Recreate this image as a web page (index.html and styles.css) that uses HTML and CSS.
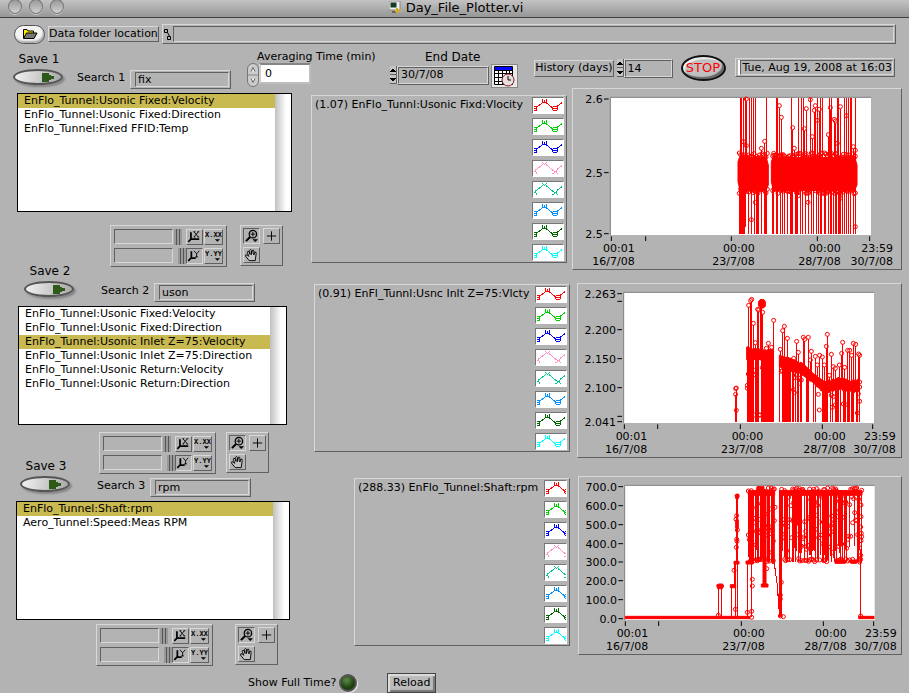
FILE: index.html
```html
<!DOCTYPE html>
<html lang="en">
<head>
<meta charset="utf-8">
<title>Day_File_Plotter.vi</title>
<link rel="stylesheet" href="styles.css">
</head>
<body>
<svg class="defs" aria-hidden="true">
  <defs>
    <symbol id="axis-x" viewBox="0 0 17 15"><path d="M4.500 2V10H14M4.500 10L1.500 13" fill="none" stroke="#000" stroke-width="2"/><path d="M8 1.500L13 7.500M13 1.500L8 7.500M7.500 1.500h2M12 1.500h2M7.500 7.500h2M12 7.500h2" fill="none" stroke="#000"/></symbol>
    <symbol id="axis-y" viewBox="0 0 17 15"><path d="M5 2V10H10M4.500 10L1.500 13" fill="none" stroke="#000" stroke-width="2"/><path d="M8 1.500L11 5L14 1.500M11 5V9M9.500 8.500h3" fill="none" stroke="#000"/></symbol>
    <symbol id="fmt-x" viewBox="0 0 19 15"><text class="fmt" x="0" y="8">X.XX</text><path d="M11 10h6l-3 3z"/></symbol>
    <symbol id="fmt-y" viewBox="0 0 19 15"><text class="fmt" x="0" y="8">Y.YY</text><path d="M11 10h6l-3 3z"/></symbol>
    <symbol id="zoom" viewBox="0 0 16 15"><circle cx="9.500" cy="5.500" r="4" fill="none" stroke="#000" stroke-width="1.300"/><path d="M7 5.500h5M9.500 3v5" stroke="#000"/><path d="M6.500 8.500L2 13" stroke="#000" stroke-width="2.200"/><path d="M9 11h6l-3 3z"/></symbol>
    <symbol id="cross" viewBox="0 0 16 15"><path d="M3 7.500h10M8 2.500v10" stroke="#000"/></symbol>
    <symbol id="hand" viewBox="0 0 16 15"><path d="M5.500 13.500L1.500 8.500Q1.500 6.500 3.500 7.500L5 9L3.500 4.500Q4 2.500 5.500 4L6.500 7L6 2.500Q7 .5 8 2.500V7L9 2.500Q10.500 1.500 10.500 3.500V7.500L11.500 4.500Q13.500 4 13 6L12 13.500Z" fill="#c4c4c4" stroke="#000"/></symbol>
    <symbol id="mark-square" viewBox="0 0 30 15"><path d="M3 9.500L10 4.500M13 4.500L19 9.500M24 8.500L29 4.500" fill="none" stroke="currentColor"/><path d="M1 8.500h3M1 10.500h3M1 12.500h3M3.500 8v5M9.500 1v4M13.500 1v4M9 4.500h5M11.500 2v2M20 8.500h4M20 12.500h4M19.500 9v3M24.500 9v3M19 10.500h6" fill="none" stroke="currentColor"/></symbol>
    <symbol id="mark-cross" viewBox="0 0 30 15"><path d="M2 9.500L10 3.500M13 3.500L20 9.500M24 8.500L29 4.500M1 10.500h2M3.500 11v2M9.500 1v1M10.500 2v1M13.500 1v1M12.500 2v1M11.500 3v1M19 12.500h2M21 11.500h1M21 10.500h3M20 9.500h1M23 9.500h1M23 11.500h1M24 12.500h1" fill="none" stroke="currentColor"/></symbol>
    <symbol id="save-arrow" viewBox="0 0 13 9"><path d="M0 0H7V2H9V3H12V6H9V7H7V9H0Z" fill="#2d5a19"/></symbol>
    <symbol id="steps" viewBox="0 0 7 18"><path d="M0 0h6v18H0z" fill="#c4c4c4"/><path d="M0 8.500h6M0 17.500h6M6.500 0v18" stroke="#606060"/><path d="M0 6L3 2.500L6 6zM0 12L3 15.500L6 12z"/></symbol>
  </defs>
</svg>

<header class="titlebar">
  <div class="lights"><i></i><i></i><i></i></div>
  <h1><svg width="13" height="13" viewBox="0 0 13 13"><rect x="0" y="0" width="11" height="9" fill="#eee" stroke="#888"/><rect x="1.500" y="1.500" width="6" height="5" fill="#143c22"/><path d="M3 11h6" stroke="#666" stroke-width="2"/><path d="M8 7v5M6 10l6-1" stroke="#d9ad22" stroke-width="2"/></svg>Day_File_Plotter.vi</h1>
</header>

<main>
  <div class="path-row">
    <button class="open" aria-label="Open folder"><svg width="16" height="12" viewBox="0 0 16 12"><path d="M1.500 10V1.500H5L6 3H11.500V5" fill="#ffe800" stroke="#000"/><path d="M1.500 10.500L4.500 5H15L12 10.500Z" fill="#777" stroke="#000"/></svg></button>
    <label class="raised" for="path">Data folder location</label>
    <div class="frame path"><svg width="7" height="13" viewBox="0 0 7 13"><path d="M.5 1.500h3v3h-3zM3.500 8.500h3v3h-3zM3.500 4.500L5.500 8" fill="none" stroke="#000"/></svg><input id="path" type="text"></div>
  </div>

  <div class="toolbar">
    <div class="save"><label for="save1">Save 1</label><button id="save1"><svg width="13" height="9"><use href="#save-arrow"/></svg></button></div>
    <div class="search search-top"><label for="search1">Search 1</label><div class="frame"><input id="search1" type="text" value="fix"></div></div>
    <div class="average">
      <label for="avg">Averaging Time (min)</label>
      <div class="row"><span class="knob"><svg width="12" height="24" viewBox="0 0 12 24"><rect x=".5" y=".5" width="11" height="23" rx="5.500" fill="#ccc" stroke="#777"/><path d="M1 12h10" stroke="#888"/><path d="M4 8.500L6 4.500L8 8.500M4 15.500L6 19.500L8 15.500" fill="#eee" stroke="#666"/></svg></span><input id="avg" type="text" value="0"></div>
    </div>
    <div class="end-date">
      <label for="end">End Date</label>
      <div class="row"><svg class="stepper"><use href="#steps"/></svg><div class="frame value"><input id="end" type="text" value="30/7/08"></div>
      <button class="calendar" aria-label="Choose date"><svg width="21" height="21" viewBox="0 0 21 21"><path d="M.5.5h18v18H.5z" fill="#fff" stroke="#000"/><path d="M1 1h17v3H1z" fill="#00f"/><path d="M1 4.500h17M1 7.500h17M1 11.500h17M1 15.500h17M4.500 4v14M8.500 4v14M12.500 4v14M15.500 4v14" stroke="#000"/><circle cx="14" cy="14" r="6" fill="#e9dede" stroke="#802020"/><path d="M14 10v4h3" fill="none" stroke="#000"/></svg></button></div>
    </div>
    <div class="history row"><label class="raised" for="hist">History (days)</label><svg class="stepper"><use href="#steps"/></svg><div class="frame value"><input id="hist" type="text" value="14"></div></div>
    <button class="stop">STOP</button>
    <div class="frame clock"><output>Tue, Aug 19, 2008 at 16:03</output></div>
  </div>

  <div class="columns">
    <div class="channels">
      <div class="list list-1"><select size="8" aria-label="Channels 1"><option selected>EnFlo_Tunnel:Usonic Fixed:Velocity</option><option>EnFlo_Tunnel:Usonic Fixed:Direction</option><option>EnFlo_Tunnel:Fixed FFID:Temp</option></select><i class="scroll"></i></div>
      <div class="between between-1">
        <div class="save"><label for="save2">Save 2</label><button id="save2"><svg width="13" height="9"><use href="#save-arrow"/></svg></button></div>
        <div class="side">
          <div class="palettes" data-palettes></div>
          <div class="search"><label for="search2">Search 2</label><div class="frame"><input id="search2" type="text" value="uson"></div></div>
        </div>
      </div>
      <div class="list list-2"><select size="8" aria-label="Channels 2"><option>EnFlo_Tunnel:Usonic Fixed:Velocity</option><option>EnFlo_Tunnel:Usonic Fixed:Direction</option><option selected>EnFlo_Tunnel:Usonic Inlet Z=75:Velocity</option><option>EnFlo_Tunnel:Usonic Inlet Z=75:Direction</option><option>EnFlo_Tunnel:Usonic Return:Velocity</option><option>EnFlo_Tunnel:Usonic Return:Direction</option></select><i class="scroll"></i></div>
      <div class="between between-2">
        <div class="save"><label for="save3">Save 3</label><button id="save3"><svg width="13" height="9"><use href="#save-arrow"/></svg></button></div>
        <div class="side">
          <div class="palettes" data-palettes></div>
          <div class="search"><label for="search3">Search 3</label><div class="frame"><input id="search3" type="text" value="rpm"></div></div>
        </div>
      </div>
      <div class="list list-3"><select size="8" aria-label="Channels 3"><option selected>EnFlo_Tunnel:Shaft:rpm</option><option>Aero_Tunnel:Speed:Meas RPM</option></select><i class="scroll"></i></div>
      <div class="palettes palettes-last" data-palettes></div>
    </div>

    <div class="legends">
      <div class="legend legend-1"><span>(1.07) EnFlo_Tunnl:Usonic Fixd:Vlocity</span><div class="swatches"></div></div>
      <div class="legend legend-2"><span>(0.91) EnFl_Tunnl:Usnc Inlt Z=75:Vlcty</span><div class="swatches"></div></div>
      <div class="legend legend-3"><span>(288.33) EnFlo_Tunnel:Shaft:rpm</span><div class="swatches"></div></div>
    </div>

    <div class="plots">
      <div class="plot plot-1"><svg id="plot1" viewBox="9 12 984 540" role="img" aria-label="Usonic fixed velocity"></svg></div>
      <div class="plot plot-2"><svg id="plot2" viewBox="24 12 969 519" role="img" aria-label="Usonic inlet velocity"></svg></div>
      <div class="plot plot-3"><svg id="plot3" viewBox="27 21 966 531" role="img" aria-label="Shaft rpm"></svg></div>
    </div>
  </div>

  <footer>
    <label for="full">Show Full Time?</label><input id="full" type="checkbox" class="led">
    <button class="reload">Reload</button>
  </footer>
</main>
<script src="app.js"></script>
</body>
</html>
```
FILE: styles.css
```css
* { box-sizing: border-box; }
body { margin: 0; background: #b3b3b3; color: #000; font: 11px/14px "DejaVu Sans", sans-serif; }
button, input, select { font: inherit; color: inherit; margin: 0; padding: 0; border: 0; border-radius: 0; background: transparent; outline: 0; }
input { min-width: 0; }
svg { display: block; flex: none; }
.defs { position: absolute; width: 0; height: 0; }
.row { display: flex; }

.titlebar { position: relative; display: flex; justify-content: center; height: 18px; background: linear-gradient(#c3c3c3, #969696); border-bottom: 1px solid #404040; }
.titlebar h1 { display: flex; gap: 4px; margin: 0 0 0 3px; font: 13px/15px "DejaVu Sans", sans-serif; }
.titlebar h1 svg { margin-top: 1px; }
.lights { position: absolute; left: 8px; top: -1px; display: flex; gap: 7px; }
.lights i { width: 14px; height: 15px; border: 1px solid #777; border-radius: 50%; background: linear-gradient(#999, #d0d0d0); box-shadow: 0 1px #ccc; }

.frame { display: flex; height: 19px; padding: 1px; border: 1px solid; border-color: #d8d8d8 #606060 #606060 #d8d8d8; }
.frame input { flex: 1; width: 100%; padding-left: 2px; border: 1px solid; border-color: #606060 #d8d8d8 #d8d8d8 #606060; }
.raised { border: 1px solid; border-color: #d8d8d8 #606060 #606060 #d8d8d8; white-space: nowrap; }

.path-row { display: flex; align-items: center; padding: 6px 13px 0 14px; }
.open { display: flex; align-items: center; justify-content: center; width: 31px; height: 19px; border: 1px solid #555; border-radius: 10px; background: #f4f4f4; box-shadow: inset -1px -2px 2px #aaa; }
.path-row .raised { margin: 0 3px; min-width: 107px; }
.path { flex: 1; height: 20px; }
.path svg { margin: 2px 2px 0 0; }

.toolbar { display: flex; align-items: flex-start; padding: 2px 14px 0 13px; height: 44px; }
.save { width: 52px; flex: none; text-align: center; }
.save label { display: block; font-size: 12px; line-height: 16px; margin-top: 5px; }
.save button { display: flex; align-items: center; justify-content: flex-end; width: 50px; height: 16px; padding-right: 6px; margin-top: 2px; border: 2px solid #555; border-radius: 50%; background: linear-gradient(100deg, #f2f2f2, #a8a8a8); box-shadow: 2px 2px 2px #858585; }
.search { display: flex; align-items: flex-start; }
.search label { width: 53px; padding-top: 1px; white-space: nowrap; }
.search .frame { width: 101px; }
.search input { margin-left: 3px; }
.search-top { margin: 24px 0 0 12px; }
.average { margin: 5px 0 0 16px; width: 126px; }
.average label { display: block; margin-left: 10px; line-height: 12px; white-space: nowrap; }
.average input { width: 52px; height: 21px; padding: 0 4px; background: #fff; border: 2px solid; border-color: #858585 #bebebe #bebebe #d0d0d0; }
.end-date { margin: 2px 0 0 17px; width: 130px; }
.end-date > label { display: block; margin-left: 35px; font-size: 12px; line-height: 18px; white-space: nowrap; }
.stepper { width: 7px; height: 18px; shape-rendering: crispEdges; }
.value { padding: 0; }
.end-date .row { align-items: center; height: 18px; }
.end-date .frame { width: 92px; }
.calendar { display: flex; align-items: center; justify-content: center; width: 27px; height: 24px; margin: 2px 0 0 2px; background: #e8e8e8; border: 1px solid #888; }
.history { margin: 13px 0 0 15px; }
.history .raised { height: 17px; margin: 1px 3px 0 0; min-width: 78px; }
.history .frame { width: 49px; }
.stop { flex: none; width: 45px; height: 26px; margin: 9px 0 0 8px; color: #f00; font-size: 13px; border: 2px solid #111; border-radius: 50%; background: #c0c0c0; box-shadow: inset 2px 2px 1px #eee, inset -2px -2px 1px #666; }
.clock { margin: 12px 0 0 9px; flex: 1; max-width: 220px; }
.clock output { flex: 1; margin-left: 3px; padding-left: 2px; border: 1px solid; border-color: #606060 #d8d8d8 #d8d8d8 #606060; white-space: nowrap; box-shadow: -2px 0 #fff; }

.columns { display: grid; grid-template-columns: 300px 270px 1fr; align-items: start; }
.channels { padding: 5px 0 0 17px; }
.list { display: flex; border: 1px solid #000; background: #fff; }
.list-1 { width: 275px; }
.list-2 { width: 269px; margin-left: 1px; }
.list-3 { width: 274px; margin-left: -1px; }
.list select { flex: 1; min-width: 0; height: 117px; overflow: hidden; scrollbar-width: none; }
.list option { height: 14px; min-height: 14px; padding: 0 0 0 6px; line-height: 14px; color: #000; }
.list option:checked { color: #000; background: #c9b951 linear-gradient(#c9b951, #c9b951); }
.scroll { width: 16px; background: linear-gradient(90deg, #c0c0c0, #fff 70%); }
.between { display: flex; align-items: flex-end; }
.between-1 { padding: 13px 0 4px 7px; }
.between-2 { padding: 7px 0 4px 3px; }
.between .save { padding-bottom: 5px; }
.side { flex: 1; }
.between-1 .palettes { margin-left: 34px; }
.between-2 .palettes { margin-left: 27px; gap: 10px; }
.between-1 .search { margin: 16px 0 0 25px; }
.between-2 .search { margin: 4px 0 0 25px; }
.palettes { display: flex; gap: 13px; align-items: flex-start; }
.palettes-last { margin: 4px 0 0 79px; gap: 22px; }
.axes { width: 117px; height: 42px; padding: 3px; border: 1px solid; border-color: #d8d8d8 #606060 #606060 #d8d8d8; }
.axis { display: flex; height: 16px; margin-bottom: 3px; }
.axis input { width: 60px; height: 15px; border: 1px solid; border-color: #606060 #d8d8d8 #d8d8d8 #606060; }
.lock { width: 8px; margin: 0 4px 0 1px; background: repeating-linear-gradient(90deg, #999 0 2px, #555 2px 3px); }
.axis + .axis .lock { margin: 0 0 0 5px; }
.axis button, .tools button { display: block; height: 16px; width: 17px; border: 1px solid; border-color: #d8d8d8 #606060 #606060 #d8d8d8; }
.axis button:last-child { width: 19px; margin-left: 1px; }
.axes .pressed, .tools .pressed { border-color: #606060 #d8d8d8 #d8d8d8 #606060; }
.axis svg, .tools svg { width: 100%; height: 14px; }
.fmt { font: bold 8px "Liberation Mono", monospace; }
.tools { display: grid; grid-template-columns: 17px 17px; gap: 3px; width: 43px; padding: 2px; border: 1px solid; border-color: #d8d8d8 #606060 #606060 #d8d8d8; }

.legend { display: flex; justify-content: space-between; height: 168px; padding: 1px 2px 0 3px; border: 1px solid; border-color: #d8d8d8 #606060 #606060 #d8d8d8; white-space: nowrap; }
.legend span { padding-top: 1px; }
.legend-1 { margin: 7px 3px 0 11px; }
.legend-2 { margin: 21px 0 0 14px; }
.legend-3 { margin: 26px 0 0 54px; }
.swatches { display: grid; gap: 4px; align-content: start; }
.swatch { width: 32px; height: 17px; overflow: hidden; background: #fff; border: 1px solid; border-color: #777 #fff #fff #777; }
.legend-3 .swatch { width: 23px; }
.swatch svg { width: 30px; height: 15px; shape-rendering: crispEdges; }

.plots { padding-right: 7px; }
.plot { border: 1px solid; border-color: #d8d8d8 #606060 #606060 #d8d8d8; }
.plot svg { width: 100%; height: auto; }
.plot-1 { margin-left: 2px; }
.plot-2 { margin: 13px 0 0 7px; }
.plot-3 { margin: 18px 0 0 8px; }
.plot text { font: 33px "DejaVu Sans", sans-serif; text-anchor: end; }
.area { fill: #fff; }
.rim { fill: none; stroke: #808080; stroke-width: 3; }
.tick { stroke: #000; stroke-width: 3; }
.trace { fill: none; stroke: #f00; stroke-width: 3; shape-rendering: crispEdges; }
.solid { fill: #f00; stroke: #f00; stroke-width: 3; stroke-linejoin: round; }
.dots { fill: none; stroke: #f00; stroke-width: 3; }

footer { display: flex; align-items: center; padding: 7px 0 0 248px; }
footer label { min-width: 85px; white-space: nowrap; }
.led { appearance: none; width: 18px; height: 18px; margin: 0 30px 0 3px; border: 2px solid #555; border-radius: 50%; background: radial-gradient(circle at 40% 30%, #5d8a48, #1c4010 60%); box-shadow: 1px 1px 1px #eee; }
.reload { width: 49px; height: 20px; border: 1px solid #444; background: #bbb; box-shadow: inset 2px 2px 1px #ddd, inset -2px -2px 1px #777; }
```
FILE: app.js
```js
// Shared palettes and legend swatches
document.querySelectorAll('[data-palettes]').forEach(el => {
  const axis = (n, on) => `<div class="axis"><input type="text" aria-label="${n} scale label"><i class="lock"></i>` +
    `<button class="${on ? 'pressed' : ''}" aria-label="Autoscale ${n}"><svg><use href="#axis-${n}"/></svg></button>` +
    `<button aria-label="Format ${n}"><svg><use href="#fmt-${n}"/></svg></button></div>`;
  const tool = (n, c) => `<button class="${c}" aria-label="${n}"><svg><use href="#${n}"/></svg></button>`;
  el.innerHTML = `<div class="axes">${axis('x', false)}${axis('y', true)}</div>` +
    `<div class="tools">${tool('zoom', 'pressed')}${tool('cross', '')}${tool('hand', '')}</div>`;
});
const COLORS = ['#f00', '#00d000', '#00f', '#ff90c8', '#00c890', '#0090ff', '#006400', '#0ff'];
document.querySelectorAll('.swatches').forEach(el => {
  el.innerHTML = COLORS.map((c, i) =>
    `<div class="swatch"><svg color="${c}"><use href="#mark-${i === 3 || i === 4 ? 'cross' : 'square'}"/></svg></div>`).join('');
});

// Plots: three drawing units to a pixel
let seed = 7;
const rnd = () => (seed = (seed * 16807) % 2147483647) / 2147483647;
const vline = (x, a, b) => `M${x} ${a}V${b}`;
const ring = (x, y) => `M${x - 6} ${y}a6 6 0 1 0 12 0a6 6 0 1 0 -12 0`;

function frame(p) {
  const [l, t, r, b] = p.area;
  let s = `<rect class="area" x="${l}" y="${t}" width="${r - l}" height="${b - t}"/><path class="rim" d="M${l} ${b}V${t}H${r}"/>`;
  p.y.forEach(([label, y]) => {
    s += `<path class="tick" d="M${l - 19} ${y}h14"/>`;
    if (label) s += `<text x="${l - 23}" y="${y + 13}">${label}</text>`;
  });
  p.x.forEach(([x, time, date, tx]) => {
    s += `<path class="tick" d="M${x} ${b + 4}v14"/>`;
    if (time) s += `<text x="${tx}" y="${b + 52}">${time}</text><text x="${tx}" y="${b + 91}">${date}</text>`;
  });
  return s;
}
function show(id, p, solid, lines, dots) {
  document.getElementById(id).innerHTML = frame(p) +
    `<path class="trace" d="${lines}"/><path class="solid" d="${solid}"/><path class="dots" d="${dots}"/>`;
}

// Fixed velocity
{
  let lines = '', dots = '', solid = '';
  [511, 514, 519, 525, 538, 544, 549, 555, 590, 619, 622, 663, 684, 693, 700, 721, 742, 751, 757, 778, 784, 802, 805, 823, 829, 836, 841, 844, 856]
    .forEach(x => lines += vline(x, 40, 260));
  for (let x = 509; x < 530; x += 3) lines += vline(x, 260, x < 527 ? 446 : 425);
  [536, 545, 553, 558, 561, 564, 575, 583, 586, 589, 608, 611, 619, 622, 630, 637, 643, 652, 660, 663, 666, 675, 678, 681, 690, 698, 707, 714, 723, 729, 738, 744, 750, 753, 762, 765, 774, 780, 783, 790, 795, 798, 804, 807, 810, 817, 824, 830, 836, 842, 850, 856]
    .forEach(x => lines += vline(x, 260, 446));
  [[529, 42], [628, 62], [634, 97], [709, 71], [721, 44], [736, 62], [733, 76], [748, 73], [742, 106], [668, 128], [703, 131], [727, 155], [781, 68], [811, 65], [793, 103], [796, 108], [829, 92], [775, 149], [520, 170], [529, 182], [574, 190], [584, 169], [611, 205], [673, 190], [802, 175], [850, 185], [856, 196]]
    .forEach(([x, y]) => { lines += vline(x, y + 6, 260); dots += ring(x, y); });
  [[556, 352], [544, 404], [714, 352], [811, 340], [856, 425], [685, 332]].forEach(([x, y]) => dots += ring(x, y));
  for (const [a, b] of [[508, 592], [608, 858]]) {
    solid += `M${a - 4} 230L${a} 218H${b - 3}L${b + 3} 240V300L${b - 4} 316H${a + 2}L${a - 4} 290Z`;
    for (let x = a; x <= b; x += 4) dots += ring(x, 204 + Math.round(rnd() * 16)) + ring(x, 308 + Math.round(rnd() * 18));
  }
  show('plot1', {
    area: [121, 37, 903, 450],
    y: [['2.6', 42], ['2.5', 263], ['2.5', 446]],
    x: [[124, '00:01', '16/7/08', 194], [227], [484, '00:00', '23/7/08', 554], [742, '00:00', '28/7/08', 812], [899, '23:59', '30/7/08', 969]]
  }, solid, lines, dots);
}

// Inlet velocity
{
  const mid = x => x < 620 ? 220 + (x - 530) / 12 : x < 695 ? 242 + (x - 625) / 3 : x < 750 ? 265 + (x - 695) * .85 : 315 + Math.sin(x / 12) * 4;
  let lines = '', dots = '', solid = '';
  [[536, 76], [542, 62], [545, 58], [550, 130], [556, 188], [563, 88], [566, 90], [572, 72], [575, 65], [578, 97], [595, 190], [589, 205], [605, 202], [611, 121], [631, 208], [638, 152], [643, 139], [652, 175], [671, 235], [680, 184], [685, 217], [700, 172], [704, 178], [715, 172], [721, 240], [724, 214], [736, 229], [742, 255], [749, 226], [757, 231], [763, 255], [769, 199], [772, 163], [784, 223], [778, 286], [790, 260], [796, 265], [808, 255], [815, 220], [818, 187], [824, 262], [833, 211], [839, 211], [845, 226], [850, 190], [857, 193], [866, 222], [869, 226]]
    .forEach(([x, y]) => { lines += vline(x, y + 6, Math.round(mid(x))); dots += ring(x, y); });
  for (let x = 532; x <= 868; x += 3) {
    if (x > 612 && x < 628) continue;
    const m = Math.round(mid(x));
    if (x > 550 && x < 556 || x > 567 && x < 574) { dots += ring(x, 405); }
    else if (x < 612 || x > 640 && x < 662 || rnd() < .6) lines += vline(x, m, 426);
    if (rnd() < .24) dots += ring(x, m + 20 + Math.round(rnd() * 65));
  }
  for (const [a, b] of [[530, 614], [628, 871]]) {
    let up = '', down = '';
    for (let x = a; x <= b; x += 5) {
      const m = Math.round(mid(x)), j = Math.round(rnd() * 6);
      up += `L${x} ${m - 14 - j}`; down = `L${x} ${m + 14 + j}` + down;
    }
    solid += 'M' + up.slice(1) + down + 'Z';
  }
  solid += 'M566 65l4-6h12l4 6v14l-6 5h-8l-6-5z';
  lines += vline(496, 345, 426) + vline(499, 326, 426);
  dots += ring(499, 324) + ring(497, 326) + ring(497, 343) + ring(499, 391) + ring(532, 316) + ring(532, 325) + ring(869, 306) + ring(869, 321) + ring(869, 364);
  show('plot2', {
    area: [161, 37, 912, 429],
    y: [['2.263', 41], ['', 64], ['2.200', 149], ['2.150', 236], ['2.100', 323], ['', 409], ['2.041', 425]],
    x: [[163, '00:01', '16/7/08', 232], [263], [511, '00:00', '23/7/08', 580], [757, '00:00', '28/7/08', 827], [908, '23:59', '30/7/08', 977]]
  }, solid, lines, dots);
}

// Shaft speed
{
  let lines = '', dots = '', solid = 'M166 439H540V446H166ZM866 439H912V446H866Z';
  lines += vline(445, 349, 440) + vline(455, 349, 440) + vline(485, 348, 440) + vline(496, 278, 440) + vline(493, 278, 348) +
    vline(499, 80, 278) + vline(502, 80, 440) + vline(532, 275, 440) + vline(544, 275, 440) + vline(872, 240, 440) +
    vline(629, 60, 442) + vline(632, 60, 442) + vline(635, 60, 442) + 'M613 280L621 340L629 440';
  solid += 'M440 345l6-3h12l3 6l-4 8h-14zM481 344h16v9h-16zM495 76l4-4h6l3 6l-4 9h-6zM497 150h8v24h-8zM492 274h15v8h-15zM528 273h22v9h-22zM535 62H614V76H535ZM630 62H876V76H630ZM562 50H582V64H562ZM579 60H588V346H579ZM574 342H594V351H574ZM540 70H549V278H540ZM606 70H613V280H606Z';
  [[500, 137], [498, 148], [502, 180], [500, 208], [501, 214], [499, 232], [492, 301], [496, 418], [445, 436], [532, 427], [545, 424], [547, 328], [547, 348], [590, 296], [634, 337], [631, 375], [631, 387], [631, 438], [640, 440], [872, 438], [615, 112], [545, 442]]
    .forEach(([x, y]) => dots += ring(x, y));
  for (const [a, b] of [[535, 613], [635, 875]]) {
    for (let x = a; x <= b; x += 3) {
      if (rnd() < .72) lines += vline(x, 60, 275 - (rnd() < .5 ? Math.round(rnd() * 50) : 0));
      if (rnd() < .45) dots += ring(x, 54 + Math.round(rnd() * 10));
      if (rnd() < .5) dots += ring(x, 266 + Math.round(rnd() * 10));
      dots += ring(x, 80 + Math.round(rnd() * 170));
    }
  }
  solid += 'M670 70H690V165H670ZM795 270H826V280H795ZM842 270H860V280H842Z';
  dots += ring(873, 105) + ring(873, 140) + ring(874, 190) + ring(873, 212) + ring(872, 256) + ring(872, 268);
  show('plot3', {
    area: [164, 46, 914, 450],
    y: [['700.0', 50], ['600.0', 107], ['500.0', 164], ['400.0', 221], ['300.0', 276], ['200.0', 332], ['100.0', 389], ['0.0', 446]],
    x: [[166, '00:01', '16/7/08', 235], [266], [514, '00:00', '23/7/08', 584], [760, '00:00', '28/7/08', 830], [911, '23:59', '30/7/08', 980]]
  }, solid, lines, dots);
}
```
